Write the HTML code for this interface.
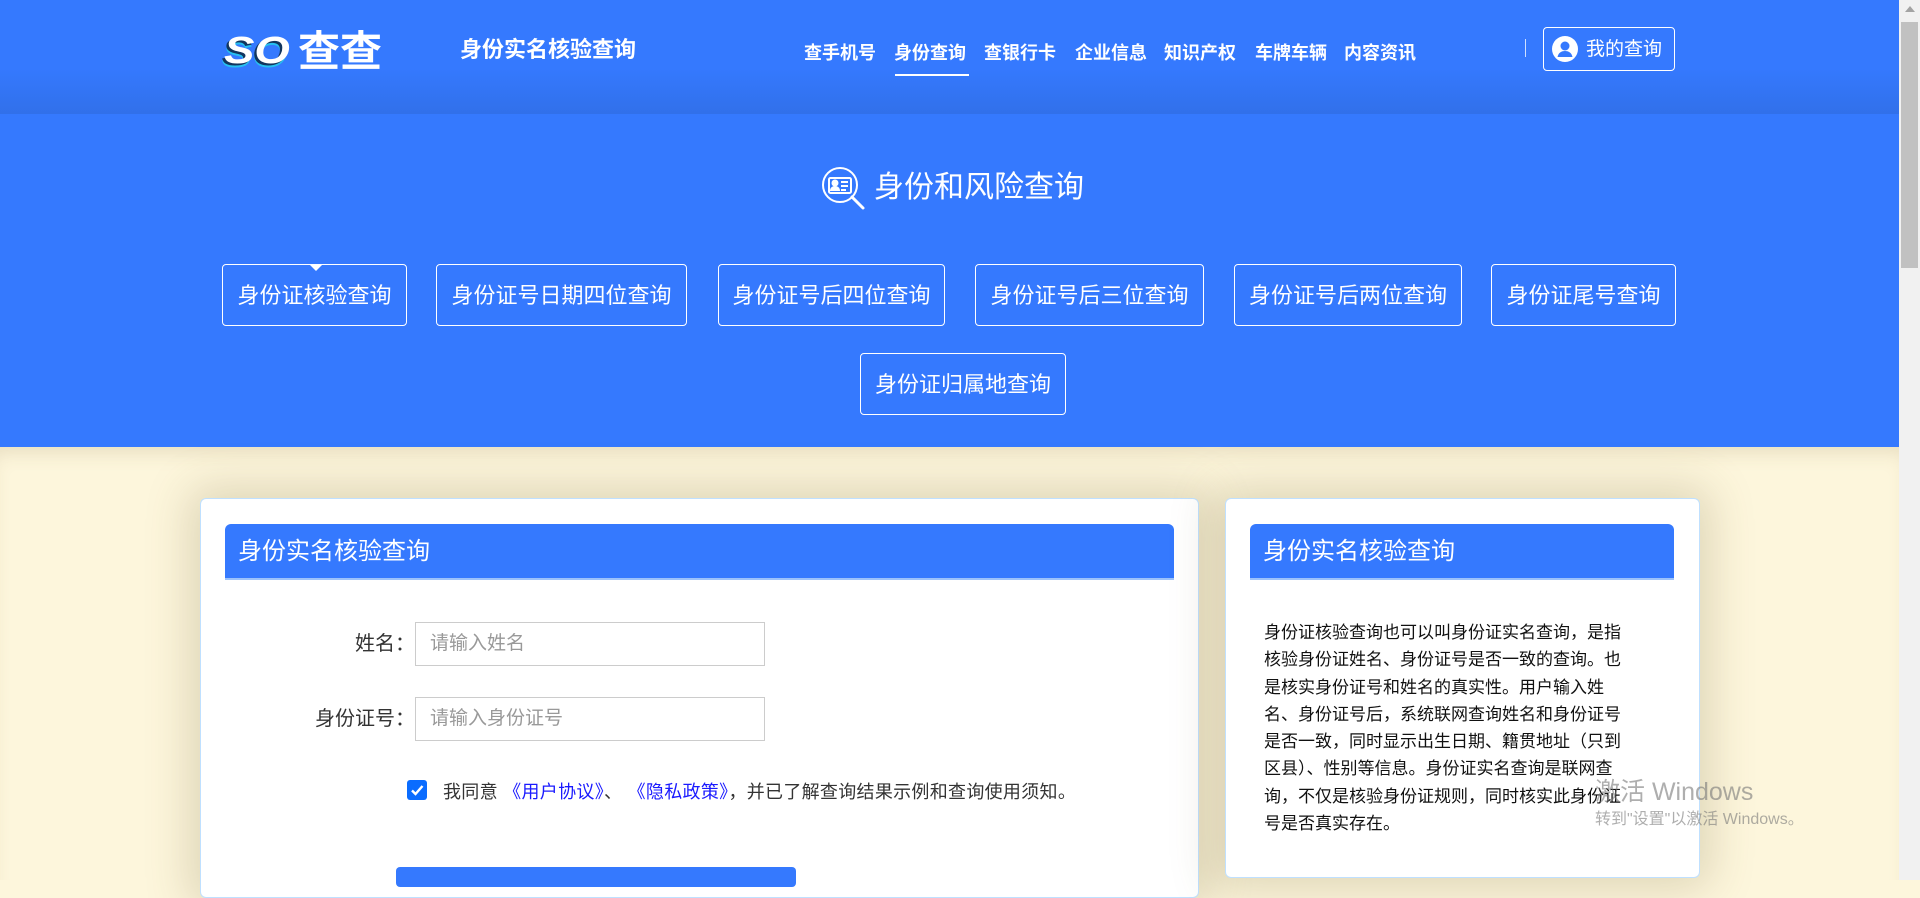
<!DOCTYPE html>
<html><head><meta charset="utf-8"><style>
*{margin:0;padding:0;box-sizing:border-box}
body{width:1920px;height:880px;overflow:hidden;position:relative;background:#fdf6dc;font-family:"Liberation Sans","Noto Sans CJK SC",sans-serif}
.a{position:absolute;white-space:nowrap}
#hdr{left:0;top:0;width:1899px;height:114px;background:linear-gradient(#3579fe 0%,#3579fe 60%,#3170ea 100%)}
#blue{left:0;top:114px;width:1899px;height:333px;background:#3579fe}
#cream{left:0;top:447px;width:1899px;height:433px;background:#fdf6dc;box-shadow:inset 0 14px 20px -10px rgba(120,100,50,.18)}
.nav{top:41px;font-size:18px;font-weight:bold;color:#fff;line-height:24px}
.tab{height:62px;border:1px solid #fff;border-radius:4px;color:#fff;font-size:22px;line-height:62px;text-align:center}
.card{background:#fff;border:1px solid #bfe0ff;border-radius:6px;box-shadow:0 0 45px 10px rgba(110,95,50,.22)}
.ch{background:#3579fe;border-radius:6px 6px 0 0;color:#fff;font-size:24px;line-height:56px;padding-left:13px;border-bottom:2px solid #9cc2fb}
.inp{width:350px;height:44px;border:1px solid #ccc;font-size:19px;color:#999;line-height:42px;padding-left:14px}
.lbl{font-size:20px;color:#333;text-align:right;width:210px;line-height:44px}
</style></head><body>
<div class="a" id="hdr"></div>
<div class="a" id="blue"></div>
<div class="a" id="cream"></div>

<!-- logo -->
<div class="a" style="left:224px;top:28px;font-size:38px;font-weight:bold;font-style:italic;color:#fff;line-height:46px;transform:scaleX(1.2);transform-origin:left;text-shadow:-2px 2px 0 #12355f,-2px 4px 0 #27c0f0">SO</div>
<div class="a" style="left:298px;top:27px;font-size:42px;font-weight:bold;color:#fff;line-height:50px">查查</div>
<div class="a" style="left:460px;top:36px;font-size:22px;font-weight:bold;color:#fff;line-height:28px">身份实名核验查询</div>

<div class="a nav" style="left:804px">查手机号</div>
<div class="a nav" style="left:894px">身份查询</div>
<div class="a" style="left:895px;top:74px;width:74px;height:2px;background:#fff"></div>
<div class="a nav" style="left:984px">查银行卡</div>
<div class="a nav" style="left:1075px">企业信息</div>
<div class="a nav" style="left:1164px">知识产权</div>
<div class="a nav" style="left:1255px">车牌车辆</div>
<div class="a nav" style="left:1344px">内容资讯</div>
<div class="a" style="left:1525px;top:39px;width:1px;height:18px;background:#cfe0ff"></div>
<div class="a" style="left:1543px;top:27px;width:132px;height:44px;border:1px solid #fff;border-radius:4px"></div>
<svg class="a" style="left:1552px;top:36px" width="26" height="26" viewBox="0 0 26 26"><circle cx="13" cy="13" r="13" fill="#fff"/><circle cx="13" cy="10" r="4.5" fill="#3579fe"/><path d="M5.5 21c1-4.5 4-6 7.5-6s6.5 1.5 7.5 6z" fill="#3579fe"/></svg>
<div class="a" style="left:1586px;top:38px;font-size:19px;color:#fff;line-height:24px">我的查询</div>

<!-- section title -->
<svg class="a" style="left:820px;top:165px" width="48" height="48" viewBox="0 0 48 48" fill="none" stroke="#fff" stroke-width="2"><circle cx="20" cy="20" r="17"/><path d="M32 32l11 11" stroke-width="3" stroke-linecap="round"/><rect x="9" y="13" width="22" height="15" rx="1.5"/><circle cx="15" cy="18" r="2.5" fill="#fff"/><path d="M11 26c0-3 2-4 4-4s4 1 4 4" fill="#fff"/><path d="M21 17h7M21 21h7M21 25h5"/></svg>
<div class="a" style="left:874px;top:169px;font-size:30px;color:#fff;line-height:38px">身份和风险查询</div>

<div class="a tab" style="left:222px;top:264px;width:185px">身份证核验查询</div>
<div class="a" style="left:309px;top:264px;width:0;height:0;border-left:7px solid transparent;border-right:7px solid transparent;border-top:7px solid #fff"></div>
<div class="a tab" style="left:436px;top:264px;width:251px">身份证号日期四位查询</div>
<div class="a tab" style="left:718px;top:264px;width:227px">身份证号后四位查询</div>
<div class="a tab" style="left:975px;top:264px;width:229px">身份证号后三位查询</div>
<div class="a tab" style="left:1234px;top:264px;width:228px">身份证号后两位查询</div>
<div class="a tab" style="left:1491px;top:264px;width:185px">身份证尾号查询</div>
<div class="a tab" style="left:860px;top:353px;width:206px">身份证归属地查询</div>

<!-- left card -->
<div class="a card" style="left:200px;top:498px;width:999px;height:400px"></div>
<div class="a ch" style="left:225px;top:524px;width:949px;height:56px">身份实名核验查询</div>
<div class="a lbl" style="left:205px;top:622px">姓名：</div>
<div class="a inp" style="left:415px;top:622px">请输入姓名</div>
<div class="a lbl" style="left:205px;top:697px">身份证号：</div>
<div class="a inp" style="left:415px;top:697px">请输入身份证号</div>
<div class="a" style="left:407px;top:780px;width:20px;height:20px;background:#0a6cff;border-radius:3px"></div>
<svg class="a" style="left:407px;top:780px" width="20" height="20" viewBox="0 0 20 20"><path d="M5 10.5l3.5 3.5 7-8" stroke="#fff" stroke-width="2.4" fill="none"/></svg>
<div class="a" style="left:443px;top:780px;font-size:18px;color:#333;line-height:24px;letter-spacing:.3px">我同意 <span style="color:#1a1aff">《用户协议》</span>、 <span style="color:#1a1aff">《隐私政策》</span>，并已了解查询结果示例和查询使用须知。</div>
<div class="a" style="left:396px;top:867px;width:400px;height:20px;background:#3579fe;border-radius:4px"></div>

<!-- right card -->
<div class="a card" style="left:1225px;top:498px;width:475px;height:380px"></div>
<div class="a ch" style="left:1250px;top:524px;width:424px;height:56px">身份实名核验查询</div>
<div class="a" style="left:1264px;top:619px;width:368px;font-size:17px;color:#111;line-height:27.3px;white-space:normal">身份证核验查询也可以叫身份证实名查询，是指核验身份证姓名、身份证号是否一致的查询。也是核实身份证号和姓名的真实性。用户输入姓名、身份证号后，系统联网查询姓名和身份证号是否一致，同时显示出生日期、籍贯地址（只到区县）、性别等信息。身份证实名查询是联网查询，不仅是核验身份证规则，同时核实此身份证号是否真实存在。</div>

<div class="a" style="left:1595px;top:777px;font-size:25px;color:rgba(120,120,120,.6);line-height:30px">激活 Windows</div>
<div class="a" style="left:1595px;top:810px;font-size:16px;color:rgba(120,120,120,.6);line-height:20px">转到"设置"以激活 Windows。</div>

<!-- scrollbar -->
<div class="a" style="left:1899px;top:0;width:21px;height:880px;background:#f1f1f1"></div>
<div class="a" style="left:1901px;top:22px;width:17px;height:246px;background:#c1c1c1"></div>
<div class="a" style="left:1905px;top:6px;width:0;height:0;border-left:5px solid transparent;border-right:5px solid transparent;border-bottom:6px solid #a3a3a3"></div>
</body></html>
